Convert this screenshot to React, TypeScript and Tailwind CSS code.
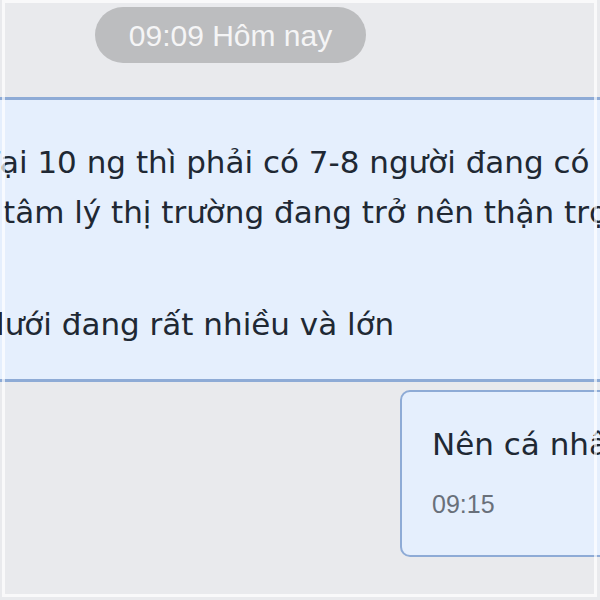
export default function App() {
  return (
    <div className="relative w-[600px] h-[600px] overflow-hidden bg-[#e9eaed] font-['DejaVu_Sans',sans-serif]">
      <div className="pt-[7px] pl-[95px]">
        <div className="flex h-[56px] w-[271px] items-center justify-center rounded-full bg-[#bcbdbf] font-['Liberation_Sans',Arial,sans-serif] text-[30px] text-[#f5f5f6]">
          09:09 Hôm nay
        </div>
      </div>

      <div className="mt-[34px] h-[285px] overflow-hidden border-y-[3px] border-[#8eabd6] bg-[#e5effd] pt-[37px] text-[31px] leading-[50px] text-[#202833] whitespace-nowrap">
        <p className="-ml-[19px]">Tại 10 ng thì phải có 7-8 người đang có lãi</p>
        <p className="pl-[3px]">tâm lý thị trường đang trở nên thận trọng</p>
        <p className="mt-[62px] -ml-[15px]">dưới đang rất nhiều và lớn</p>
      </div>

      <div className="mt-[8px] ml-[400px] h-[167px] w-[300px] rounded-[10px] border-2 border-[#8eabd6] bg-[#e5effd] pl-[30px] pt-[32px] whitespace-nowrap">
        <p className="text-[31px] leading-[40px] text-[#202833]">Nên cá nhân hoá</p>
        <p className="mt-[22px] font-['Liberation_Sans',Arial,sans-serif] text-[25px] text-[#69707a]">09:15</p>
      </div>

      <div className="pointer-events-none absolute top-0 left-[2px] right-[3px] bottom-[3px] border-[3px] border-white/70" />
    </div>
  );
}
